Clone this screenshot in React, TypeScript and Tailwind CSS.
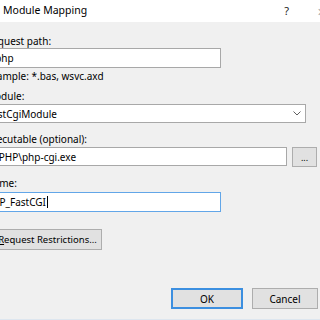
import React from "react";

const font = { fontFamily: '"Noto Sans", "Open Sans", sans-serif' };

function Label({ children, className = "" }: { children: React.ReactNode; className?: string }) {
  return (
    <div className={`h-[12px] leading-[12px] text-[10px] text-black whitespace-nowrap pl-[3px] ${className}`}>
      {children}
    </div>
  );
}

export default function App() {
  return (
    <div
      className="relative w-[320px] h-[320px] overflow-hidden bg-[#f0f0f0] text-black"
      style={font}
    >
      {/* Title bar */}
      <div className="h-[22px] bg-white flex items-center text-[10.5px] whitespace-nowrap">
        <span className="ml-[3px]">Module Mapping</span>
        <span className="ml-auto mr-[31px] text-[11px] text-[#222]">?</span>
        <span className="absolute right-[-6px] top-[4px] text-[11px] text-[#aaa]">✕</span>
      </div>

      {/* Form */}
      <div className="-ml-[17px] flex flex-col">
        <Label className="mt-[13px]">Request path:</Label>
        <div className="mt-[1px] w-[238px] h-[20px] bg-white border border-[#a8a8a8] flex items-center pl-[3px] text-[10px] leading-none whitespace-nowrap">
          *.php
        </div>
        <Label className="mt-[2px]">Example: *.bas, wsvc.axd</Label>

        <Label className="mt-[8px]">Module:</Label>
        <div className="mt-[2px] w-[323px] h-[19px] bg-white border border-[#a8a8a8] flex items-center pl-[3px] pr-[4px] text-[10px] leading-none whitespace-nowrap">
          <span>FastCgiModule</span>
          <svg className="ml-auto" width="8" height="5" viewBox="0 0 8 5">
            <path d="M0.5 0.5 L4 4 L7.5 0.5" fill="none" stroke="#606060" strokeWidth="1" />
          </svg>
        </div>

        <Label className="mt-[10px]">Executable (optional):</Label>
        <div className="mt-[2px] flex items-start">
          <div className="w-[304px] h-[19px] bg-white border border-[#a8a8a8] flex items-center pl-[2px] text-[10px] leading-none whitespace-nowrap">
            C:\PHP\php-cgi.exe
          </div>
          <div className="ml-[5px] w-[25px] h-[20px] bg-[#e1e1e1] border border-[#adadad] flex items-center justify-center text-[9px] leading-none">
            ...
          </div>
        </div>

        <Label className="mt-[10px]">Name:</Label>
        <div className="mt-[3px] w-[238px] h-[20px] bg-white border border-[#62a6e8] flex items-center pl-[2px] text-[10px] leading-none whitespace-nowrap">
          <span>PHP_FastCGI</span>
          <span className="ml-[1px] w-px h-[12px] bg-black" />
        </div>

        <div className="mt-[17px] w-[119px] h-[21px] bg-[#e1e1e1] border border-[#adadad] flex items-center justify-center pl-[10px] text-[9.5px] leading-none whitespace-nowrap">
          <span>
            <span className="underline">R</span>equest Restrictions...
          </span>
        </div>
      </div>

      {/* Footer buttons */}
      <div className="mt-[38px] flex pl-[171px] gap-[9px]">
        <div className="w-[72px] h-[21px] bg-[#e1e1e1] border-2 border-[#3c8fe0] flex items-center justify-center text-[10px] leading-none">
          OK
        </div>
        <div className="w-[66px] h-[21px] bg-[#e1e1e1] border border-[#adadad] flex items-center justify-center text-[10px] leading-none">
          Cancel
        </div>
      </div>

      <div className="absolute left-0 right-0 bottom-0 h-px bg-[#dde6ef]" />
    </div>
  );
}
